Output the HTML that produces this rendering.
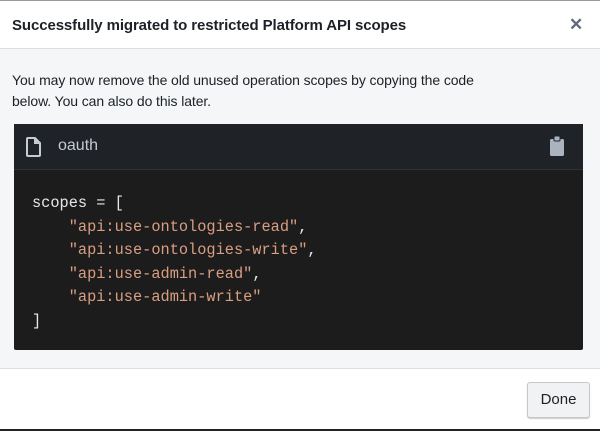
<!DOCTYPE html>
<html><head><style>
*{margin:0;padding:0;box-sizing:border-box}
body{width:600px;height:431px;background:#f5f6f8;font-family:"Liberation Sans",sans-serif;position:relative;overflow:hidden}
.hdr{position:absolute;left:0;top:0;width:600px;height:49px;background:#fff;border-top:1px solid #999;border-bottom:1px solid #dcdee1}
.title{position:absolute;left:12px;top:16px;font-size:15px;font-weight:bold;color:#1c2127;letter-spacing:-0.1px}
.x{position:absolute;left:569px;top:14px;font-size:17px;font-weight:bold;color:#5f6b7c}
.p{position:absolute;left:12px;top:70px;font-size:14px;line-height:21px;color:#1c2127;letter-spacing:-0.1px}
.code{position:absolute;left:14px;top:124px;width:569px;height:226px;background:#1c1c1c;border-radius:2px}
.ch{height:46px;background:#1f2328;border-bottom:1px solid #2f343a;position:relative}
.oauth{position:absolute;left:44px;top:13px;font-size:16px;color:#c5cbd3}
pre{position:absolute;left:18px;top:68px;font-family:"Liberation Mono",monospace;font-size:15.3px;line-height:23.5px;color:#e5e8eb}
.s{color:#d99e82}
.ftr{position:absolute;left:0;top:368px;width:600px;height:63px;background:#fff;border-top:1px solid #dcdee1;border-bottom:2px solid #222}
.btn{position:absolute;left:527px;top:13px;width:63px;height:36px;background:#f1f2f4;border:1px solid #c5c8cc;border-radius:3px;box-shadow:0 1px 1px rgba(0,0,0,.2);font-size:15px;color:#1c2127;text-align:center;line-height:34px}
</style></head><body>
<div class="hdr"><div class="title">Successfully migrated to restricted Platform API scopes</div><div class="x">✕</div></div>
<div class="p">You may now remove the old unused operation scopes by copying the code<br>below. You can also do this later.</div>
<div class="code"><div class="ch">
<svg style="position:absolute;left:12px;top:13px" width="16" height="20" viewBox="0 0 16 20"><path d="M2 1h7l5 5v12a1 1 0 0 1-1 1H2a1 1 0 0 1-1-1V2a1 1 0 0 1 1-1z" fill="none" stroke="#c5cbd3" stroke-width="2"/><path d="M8 1v6h6" fill="#c5cbd3"/></svg>
<div class="oauth">oauth</div>
<svg style="position:absolute;left:536px;top:12px" width="14" height="20" viewBox="0 0 14 20"><rect x="0" y="3" width="14" height="17" rx="1.5" fill="#abb3bf"/><rect x="4" y="0" width="6" height="5" rx="1" fill="#abb3bf" stroke="#1f2328" stroke-width="1"/></svg>
</div>
<pre>scopes = [
    <span class="s">"api:use-ontologies-read"</span>,
    <span class="s">"api:use-ontologies-write"</span>,
    <span class="s">"api:use-admin-read"</span>,
    <span class="s">"api:use-admin-write"</span>
]</pre></div>
<div class="ftr"><div class="btn">Done</div></div>
</body></html>
